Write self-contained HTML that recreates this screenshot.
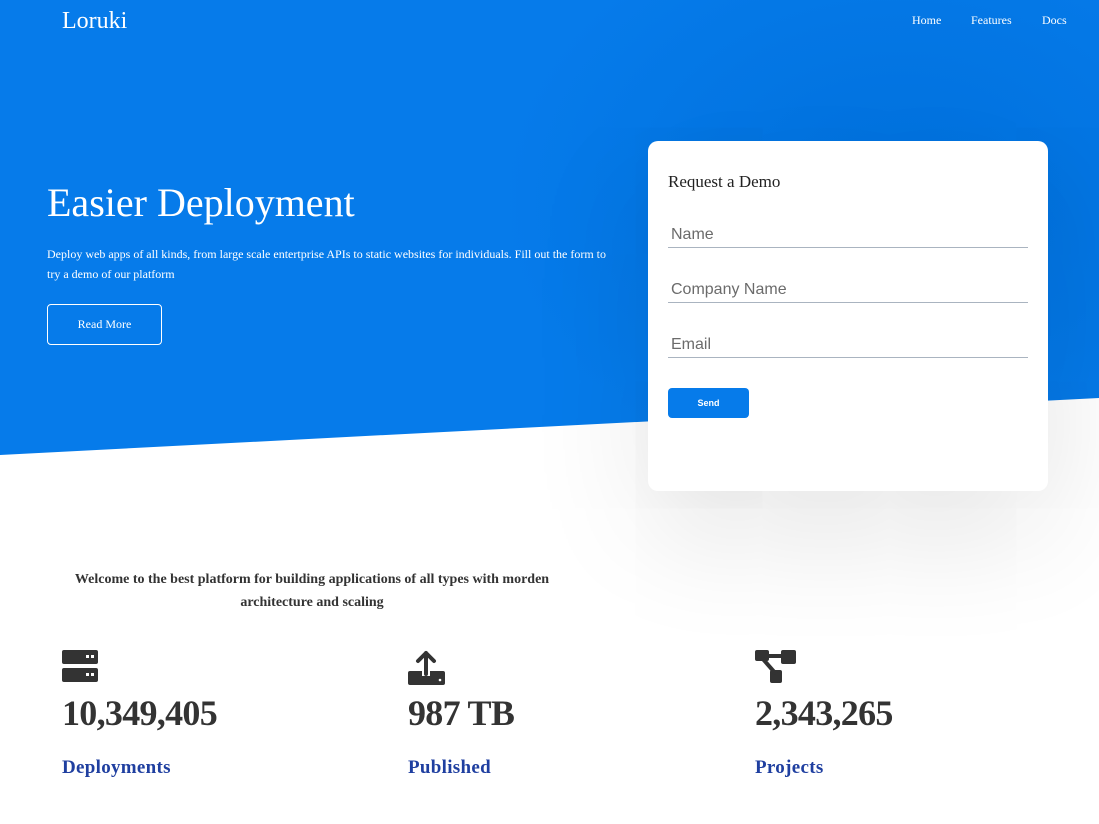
<!DOCTYPE html>
<html><head><meta charset="utf-8"><style>
*{margin:0;padding:0;box-sizing:border-box}
body{width:1099px;height:824px;overflow:hidden;background:#fff;font-family:"Liberation Serif",serif;position:relative}
.hero{position:absolute;left:0;top:0;width:1099px;height:460px;background:radial-gradient(ellipse 400px 300px at 900px 200px,#0070dc,#067bea 100%);clip-path:polygon(0 0,1099px 0,1099px 398px,0 455px)}
.logo{position:absolute;left:62px;top:8px;color:#fff;font-size:24px}
.nav{position:absolute;top:13px;color:#fff;font-size:12px}
h1{position:absolute;left:47px;top:179px;color:#fff;font-weight:normal;font-size:40px}
.desc{position:absolute;left:47px;top:244px;width:570px;color:#fff;font-size:12px;line-height:20px}
.btn{position:absolute;left:47px;top:304px;width:115px;height:41px;border:1px solid #fff;border-radius:4px;color:#fff;font-size:12px;text-align:center;line-height:39px}
.card{position:absolute;left:648px;top:141px;width:400px;height:350px;background:#fff;border-radius:10px;box-shadow:0 40px 120px rgba(0,0,0,0.12)}
.card h3{position:absolute;left:20px;top:31px;font-weight:normal;font-size:17px;color:#222}
.f{position:absolute;left:20px;width:360px;height:26px;border-bottom:1px solid #aab4c0;font-family:"Liberation Sans",sans-serif;font-size:16px;color:#6b6b6b;padding-left:3px;padding-top:4px;line-height:18px}
.send{position:absolute;left:20px;top:247px;width:81px;height:30px;background:#067bea;border-radius:4px;color:#fff;font-family:"Liberation Sans",sans-serif;font-size:9px;font-weight:bold;text-align:center;line-height:30px}
.welcome{position:absolute;left:62px;top:568px;width:500px;text-align:center;font-size:14px;font-weight:bold;color:#333;line-height:23px}
.stat{position:absolute;top:650px}
.num{position:absolute;top:42px;font-size:36px;font-weight:bold;color:#333;white-space:nowrap;letter-spacing:-0.7px}
.lab{position:absolute;top:107px;font-size:19px;font-weight:bold;color:#1f3fa0;white-space:nowrap;letter-spacing:0.3px}
</style></head><body>
<div class="hero"></div>
<div class="logo">Loruki</div>
<div class="nav" style="left:912px">Home</div>
<div class="nav" style="left:971px">Features</div>
<div class="nav" style="left:1042px">Docs</div>
<h1>Easier Deployment</h1>
<div class="desc">Deploy web apps of all kinds, from large scale entertprise APIs to static websites for individuals. Fill out the form to try a demo of our platform</div>
<div class="btn">Read More</div>
<div class="card">
<h3>Request a Demo</h3>
<div class="f" style="top:81px">Name</div>
<div class="f" style="top:136px">Company Name</div>
<div class="f" style="top:191px">Email</div>
<div class="send">Send</div>
</div>
<div class="welcome">Welcome to the best platform for building applications of all types with morden architecture and scaling</div>
<div class="stat" style="left:62px">
<svg width="36" height="33" viewBox="0 0 36 33"><rect x="0" y="0" width="36" height="14" rx="2" fill="#333"/><rect x="0" y="18" width="36" height="14" rx="2" fill="#333"/><rect x="24" y="5" width="3" height="3" fill="#fff"/><rect x="29" y="5" width="3" height="3" fill="#fff"/><rect x="24" y="23" width="3" height="3" fill="#fff"/><rect x="29" y="23" width="3" height="3" fill="#fff"/></svg>
<div class="num">10,349,405</div><div class="lab">Deployments</div></div>
<div class="stat" style="left:408px">
<svg width="37" height="35" viewBox="0 0 37 35"><path d="M18 24V3M10 11l8-8 8 8" stroke="#333" stroke-width="4" fill="none" stroke-linecap="round" stroke-linejoin="round"/><path d="M2 21h12v5h8v-5h13a2 2 0 0 1 2 2v10a2 2 0 0 1-2 2H2a2 2 0 0 1-2-2V23a2 2 0 0 1 2-2z" fill="#333"/><circle cx="32" cy="30" r="1.3" fill="#fff"/></svg>
<div class="num">987 TB</div><div class="lab">Published</div></div>
<div class="stat" style="left:755px">
<svg width="41" height="33" viewBox="0 0 41 33"><rect x="0" y="0" width="14" height="11" rx="2" fill="#333"/><rect x="26" y="0" width="15" height="14" rx="2" fill="#333"/><rect x="15" y="20" width="12" height="13" rx="2" fill="#333"/><path d="M10 6h20M7 8l14 16" stroke="#333" stroke-width="4"/></svg>
<div class="num">2,343,265</div><div class="lab">Projects</div></div>
</body></html>
